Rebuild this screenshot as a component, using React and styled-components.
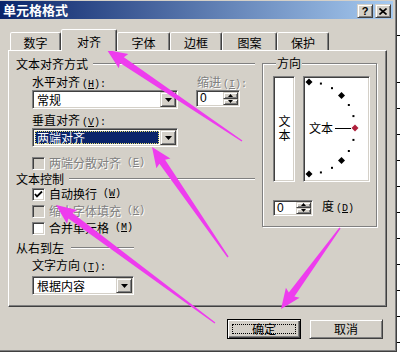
import React from 'react';
import styled, { createGlobalStyle, css } from 'styled-components';

const Global = createGlobalStyle`
  html, body { margin: 0; padding: 0; background: #fff; }
  body {
    font-family: "Noto Sans CJK SC", "Liberation Sans", sans-serif;
    font-size: 12px;
    color: #000;
  }
`;

const sunken = css`
  border: 1px solid;
  border-color: #808080 #fff #fff #808080;
  box-shadow: inset 1px 1px #404040, inset -1px -1px #d4d0c8;
`;

const raised = css`
  border: 1px solid;
  border-color: #d4d0c8 #404040 #404040 #d4d0c8;
  box-shadow: inset 1px 1px #fff, inset -1px -1px #808080;
`;

const Page = styled.div`
  position: relative;
  width: 400px;
  height: 352px;
  overflow: hidden;
  display: flex;
`;

const Dialog = styled.div`
  box-sizing: border-box;
  width: 397px;
  height: 352px;
  padding-top: 1px;
  background: #d4d0c8;
  border-right: 1px solid #404040;
  border-bottom: 1px solid #404040;
  box-shadow: inset -1px -1px #808080;
  display: flex;
  flex-direction: column;
`;

const SheetStrip = styled.div`
  flex: 1;
  background:
    linear-gradient(#000, #000) 0 35px / 100% 1px no-repeat,
    repeating-linear-gradient(to bottom, transparent 0 4px, #000 4px 5px, transparent 5px 26px) 0 78px / 100% 100% no-repeat,
    #fff;
`;

const TitleBar = styled.div`
  height: 18px;
  margin-right: 3px;
  background: linear-gradient(to right, #0a246a, #a6caf0);
  display: flex;
  align-items: center;
  justify-content: space-between;
  padding: 0 2px 0 3px;
`;

const Title = styled.span`
  color: #fff;
  font-weight: bold;
  font-size: 13px;
  line-height: 18px;
`;

const CaptionButtons = styled.div`
  display: flex;
  gap: 2px;
  align-self: flex-end;
  margin-bottom: 1px;
`;

const CaptionButton = styled.div`
  ${raised};
  box-sizing: border-box;
  width: 16px;
  height: 14px;
  background: #d4d0c8;
  display: flex;
  align-items: center;
  justify-content: center;
  font-family: "Liberation Sans", sans-serif;
  font-weight: bold;
  font-size: 11px;
  line-height: 12px;
`;

const Body = styled.div`
  padding-left: 8px;
  display: flex;
  flex-direction: column;
`;

const TabRow = styled.div`
  height: 31px;
  padding-left: 2px;
  display: flex;
  align-items: flex-end;
`;

const Tab = styled.div`
  box-sizing: border-box;
  width: ${(p) => p.$w}px;
  height: ${(p) => (p.$active ? 22 : 18)}px;
  padding-top: ${(p) => (p.$active ? 5 : 3)}px;
  margin-bottom: ${(p) => (p.$active ? -1 : 0)}px;
  border: 1px solid;
  border-bottom: none;
  border-color: #fff #404040 transparent #fff;
  border-radius: 2px 2px 0 0;
  box-shadow: inset -1px 0 #808080;
  background: #d4d0c8;
  position: relative;
  z-index: ${(p) => (p.$active ? 1 : 0)};
  display: flex;
  justify-content: center;
  line-height: 14px;
`;

const Panel = styled.div`
  box-sizing: border-box;
  width: 379px;
  height: 257px;
  border: 1px solid;
  border-color: #fff #404040 #404040 #fff;
  box-shadow: inset -1px -1px #808080;
  padding: 6px 0 0 7px;
  display: flex;
  gap: 7px;
`;

const LeftCol = styled.div`
  width: 239px;
  display: flex;
  flex-direction: column;
`;

const Header = styled.div`
  display: flex;
  align-items: center;
  height: 14px;
  line-height: 14px;
  margin-top: ${(p) => p.$mt || 0}px;
`;

const HeaderLine = styled.div`
  height: 0;
  border-top: 1px solid #808080;
  border-bottom: 1px solid #fff;
  margin-left: ${(p) => p.$gap || 5}px;
  ${(p) => (p.$width ? css`width: ${p.$width}px;` : css`flex: 1;`)}
`;

const Label = styled.div`
  height: 14px;
  line-height: 14px;
  white-space: nowrap;
  margin-left: ${(p) => (p.$indent ?? 16)}px;
  margin-top: ${(p) => p.$mt || 0}px;
  color: ${(p) => (p.$disabled ? '#808080' : '#000')};
  ${(p) => p.$disabled && css`text-shadow: 1px 1px #fff;`}
`;

const KeyHint = styled.span`
  font-family: "Liberation Mono", "DejaVu Sans Mono", monospace;
  font-size: 10px;
  margin-left: 2px;
`;

const TwoCol = styled.div`
  display: grid;
  grid-template-columns: 164px 1fr;
  align-items: start;
  margin-left: 16px;
  margin-top: ${(p) => p.$mt || 0}px;
`;

const Combo = styled.div`
  ${sunken};
  box-sizing: border-box;
  width: ${(p) => p.$w}px;
  height: 19px;
  padding: 1px;
  margin-left: ${(p) => (p.$indent ?? 16)}px;
  margin-top: ${(p) => p.$mt || 0}px;
  background: #fff;
  display: flex;
`;

const ComboText = styled.div`
  flex: 1;
  margin: 1px;
  padding-left: 2px;
  line-height: 13px;
  white-space: nowrap;
  ${(p) =>
    p.$selected &&
    css`
      background: #0a246a;
      color: #fff;
      outline: 1px dotted #e8e070;
      outline-offset: -1px;
    `}
`;

const DropButton = styled.div`
  ${raised};
  box-sizing: border-box;
  width: 16px;
  background: #d4d0c8;
  display: flex;
  align-items: center;
  justify-content: center;
`;

const Spin = styled.div`
  ${sunken};
  box-sizing: border-box;
  width: ${(p) => p.$w}px;
  height: ${(p) => p.$h || 17}px;
  padding: 1px;
  background: #fff;
  display: flex;
`;

const SpinText = styled.div`
  flex: 1;
  padding-left: 2px;
  line-height: 13px;
  font-family: "Liberation Sans", sans-serif;
`;

const SpinButtons = styled.div`
  width: 15px;
  display: flex;
  flex-direction: column;
`;

const SpinButton = styled.div`
  ${raised};
  box-sizing: border-box;
  flex: 1;
  background: #d4d0c8;
  display: flex;
  align-items: center;
  justify-content: center;
`;

const CheckRow = styled.div`
  display: flex;
  align-items: center;
  gap: 4px;
  height: 14px;
  line-height: 14px;
  margin-left: 16px;
  margin-top: ${(p) => p.$mt || 0}px;
  white-space: nowrap;
  color: ${(p) => (p.$disabled ? '#808080' : '#000')};
  ${(p) => p.$disabled && css`text-shadow: 1px 1px #fff;`}
`;

const CheckBox = styled.span`
  ${sunken};
  box-sizing: border-box;
  flex: none;
  width: 13px;
  height: 13px;
  background: ${(p) => (p.$disabled ? '#d4d0c8' : '#fff')};
  display: flex;
  align-items: center;
  justify-content: center;
`;

const Group = styled.fieldset`
  box-sizing: border-box;
  width: 115px;
  height: 171px;
  margin: -1px 0 0 0;
  padding: 6px 0 0 10px;
  min-inline-size: 0;
  border: 1px solid #808080;
  box-shadow: inset 1px 1px #fff, 1px 1px #fff;
`;

const Legend = styled.legend`
  padding: 0 1px;
  margin-left: 3px;
  line-height: 14px;
  background: #d4d0c8;
`;

const OrientRow = styled.div`
  display: flex;
  gap: 8px;
`;

const WhiteBox = styled.div`
  ${sunken};
  box-sizing: border-box;
  width: ${(p) => p.$w}px;
  height: 106px;
  background: #fff;
`;

const VerticalText = styled(WhiteBox)`
  display: flex;
  align-items: center;
  justify-content: center;
  writing-mode: vertical-rl;
  text-orientation: upright;
  line-height: 12px;
  letter-spacing: 2px;
`;

const DegreeRow = styled.div`
  display: flex;
  align-items: center;
  gap: 9px;
  margin-top: 17px;
  line-height: 14px;
`;

const ButtonRow = styled.div`
  display: flex;
  justify-content: flex-end;
  gap: 8px;
  padding: 12px 13px 0 0;
`;

const PushButton = styled.div`
  box-sizing: border-box;
  width: ${(p) => p.$w}px;
  height: 20px;
  background: #d4d0c8;
  display: flex;
  align-items: center;
  justify-content: center;
  line-height: 14px;
  ${(p) =>
    p.$default
      ? css`
          border: 1px solid #000;
          box-shadow: inset 1px 1px #fff, inset -1px -1px #404040, inset -2px -2px #808080;
        `
      : raised}
`;

const FocusRect = styled.span`
  box-sizing: border-box;
  width: calc(100% - 8px);
  height: calc(100% - 8px);
  border: 1px dotted #000;
  display: flex;
  align-items: center;
  justify-content: center;
`;

const Overlay = styled.svg`
  position: absolute;
  left: 0;
  top: 0;
  pointer-events: none;
`;

const Dial = styled.svg`
  display: block;
  font-family: "Noto Sans CJK SC", sans-serif;
`;

const Acc = ({ k, colon }) => (
  <KeyHint>
    (<u>{k}</u>){colon ? ':' : ''}
  </KeyHint>
);

const DownTri = () => (
  <svg width="7" height="4" viewBox="0 0 7 4"><path d="M0 0H7L3.5 4Z" fill="#000" /></svg>
);
const SpinTri = ({ up }) => (
  <svg width="5" height="3" viewBox="0 0 5 3" style={{ display: 'block' }}>
    <path d={up ? 'M2.5 0L5 3H0Z' : 'M0 0H5L2.5 3Z'} fill="#000" />
  </svg>
);

const CheckMark = () => (
  <svg width="9" height="9" viewBox="0 0 9 9">
    <path d="M1 4L3 6.5L8 1.5" fill="none" stroke="#000" strokeWidth="1.8" />
  </svg>
);

function Spinner({ w, h, value }) {
  return (
    <Spin $w={w} $h={h}>
      <SpinText>{value}</SpinText>
      <SpinButtons>
        <SpinButton><SpinTri up /></SpinButton>
        <SpinButton><SpinTri /></SpinButton>
      </SpinButtons>
    </Spin>
  );
}

function ComboBox({ w, text, selected, mt, indent }) {
  return (
    <Combo $w={w} $mt={mt} $indent={indent}>
      <ComboText $selected={selected}>{text}</ComboText>
      <DropButton><DownTri /></DropButton>
    </Combo>
  );
}

function OrientationDial() {
  const cx = 5, cy = 51, r = 46;
  const marks = [];
  for (let a = 90; a >= -90; a -= 15) {
    const rad = (a * Math.PI) / 180;
    const x = cx + r * Math.cos(rad);
    const y = cy - r * Math.sin(rad);
    const diamond = `M${x} ${y - 3.5}L${x + 3.5} ${y}L${x} ${y + 3.5}L${x - 3.5} ${y}Z`;
    if (a === 0) {
      marks.push(<path key={a} d={diamond} fill="#b0203c" />);
    } else if (a % 45 === 0) {
      marks.push(<path key={a} d={diamond} fill="#000" />);
    } else {
      marks.push(<rect key={a} x={x - 1} y={y - 1} width="2" height="2" fill="#000" />);
    }
  }
  return (
    <Dial width="65" height="104" viewBox="0 0 65 104">
      {marks}
      <text x="5" y="56" fontSize="12" fill="#000">文本</text>
      <line x1="31" y1="51.5" x2="47" y2="51.5" stroke="#000" strokeWidth="1" />
    </Dial>
  );
}

const arrows = [
  { tail: [242, 141], tip: [107, 50] },
  { tail: [228, 257], tip: [152, 147] },
  { tail: [215, 323], tip: [56, 205] },
  { tail: [340, 228], tip: [281, 309] },
];

function arrowPoints({ tail, tip }, head = 18, headW = 17, neck = 7, tailW = 1.5) {
  const dx = tip[0] - tail[0];
  const dy = tip[1] - tail[1];
  const len = Math.hypot(dx, dy);
  const ux = dx / len, uy = dy / len;
  const nx = -uy, ny = ux;
  const bx = tip[0] - ux * head, by = tip[1] - uy * head;
  const pt = (x, y, w) => `${(x + (nx * w) / 2).toFixed(1)},${(y + (ny * w) / 2).toFixed(1)}`;
  return [
    pt(tail[0], tail[1], tailW),
    pt(bx, by, neck),
    pt(bx - ux * 2, by - uy * 2, headW),
    `${tip[0]},${tip[1]}`,
    pt(bx - ux * 2, by - uy * 2, -headW),
    pt(bx, by, -neck),
    pt(tail[0], tail[1], -tailW),
  ].join(' ');
}

const tabs = [
  { label: '数字', w: 51 },
  { label: '对齐', w: 56, active: true },
  { label: '字体', w: 53 },
  { label: '边框', w: 52 },
  { label: '图案', w: 55 },
  { label: '保护', w: 52 },
];

export default function App() {
  return (
    <>
      <Global />
      <Page>
        <Dialog>
          <TitleBar>
            <Title>单元格格式</Title>
            <CaptionButtons>
              <CaptionButton>?</CaptionButton>
              <CaptionButton>
                <svg width="8" height="7" viewBox="0 0 8 7">
                  <path d="M0.5 0.5L7.5 6.5M7.5 0.5L0.5 6.5" stroke="#000" strokeWidth="1.6" />
                </svg>
              </CaptionButton>
            </CaptionButtons>
          </TitleBar>
          <Body>
            <TabRow>
              {tabs.map((t) => (
                <Tab key={t.label} $w={t.w} $active={t.active}>{t.label}</Tab>
              ))}
            </TabRow>
            <Panel>
              <LeftCol>
                <Header>文本对齐方式<HeaderLine /></Header>
                <TwoCol $mt={4}>
                  <Label $indent={0}>水平对齐<Acc k="H" colon /></Label>
                  <Label $indent={1} $disabled>缩进<Acc k="I" colon /></Label>
                </TwoCol>
                <TwoCol $mt={1}>
                  <ComboBox w={146} text="常规" indent={0} />
                  <Spinner w={44} value="0" />
                </TwoCol>
                <Label $mt={4}>垂直对齐<Acc k="V" colon /></Label>
                <ComboBox w={146} text="两端对齐" selected mt={1} />
                <CheckRow $mt={9} $disabled>
                  <CheckBox $disabled />两端分散对齐<Acc k="E" />
                </CheckRow>
                <Header $mt={2}>文本控制<HeaderLine /></Header>
                <CheckRow $mt={1}>
                  <CheckBox><CheckMark /></CheckBox>自动换行<Acc k="W" />
                </CheckRow>
                <CheckRow $mt={3} $disabled>
                  <CheckBox $disabled />缩小字体填充<Acc k="K" />
                </CheckRow>
                <CheckRow $mt={3}>
                  <CheckBox />合并单元格<Acc k="M" />
                </CheckRow>
                <Header $mt={6}>从右到左<HeaderLine $width={63} $gap={7} /></Header>
                <Label $mt={3}>文字方向<Acc k="T" colon /></Label>
                <ComboBox w={102} text="根据内容" mt={4} />
              </LeftCol>
              <Group>
                <Legend>方向</Legend>
                <OrientRow>
                  <VerticalText $w={22}>文本</VerticalText>
                  <WhiteBox $w={67}><OrientationDial /></WhiteBox>
                </OrientRow>
                <DegreeRow>
                  <Spinner w={40} h={16} value="0" />
                  <span>度<Acc k="D" /></span>
                </DegreeRow>
              </Group>
            </Panel>
            <ButtonRow>
              <PushButton $w={74} $default><FocusRect>确定</FocusRect></PushButton>
              <PushButton $w={74}>取消</PushButton>
            </ButtonRow>
          </Body>
        </Dialog>
        <SheetStrip />
        <Overlay width="400" height="352" viewBox="0 0 400 352">
          {arrows.map((a, i) => (
            <polygon key={i} points={arrowPoints(a)} fill="#ee3cee" />
          ))}
        </Overlay>
      </Page>
    </>
  );
}
